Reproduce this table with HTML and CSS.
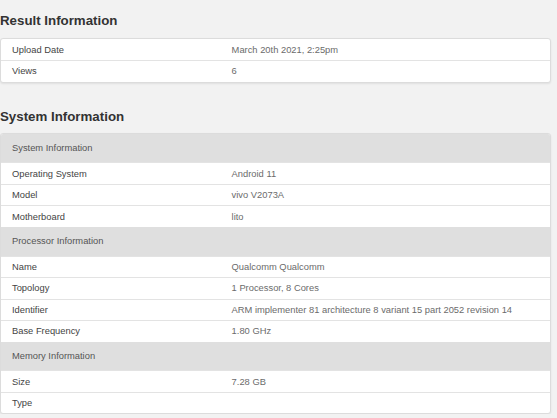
FILE: index.html
```html
<!DOCTYPE html>
<html>
<head>
<meta charset="utf-8">
<link rel="stylesheet" href="styles.css">
</head>
<body>
<div class="page">
  <h2 class="title">Result Information</h2>
  <div class="card">
    <div class="row"><div class="k">Upload Date</div><div class="v">March 20th 2021, 2:25pm</div></div>
    <div class="row"><div class="k">Views</div><div class="v">6</div></div>
  </div>
  <h2 class="title title2">System Information</h2>
  <div class="card">
    <div class="head">System Information</div>
    <div class="row"><div class="k">Operating System</div><div class="v">Android 11</div></div>
    <div class="row"><div class="k">Model</div><div class="v">vivo V2073A</div></div>
    <div class="row"><div class="k">Motherboard</div><div class="v">lito</div></div>
    <div class="head">Processor Information</div>
    <div class="row"><div class="k">Name</div><div class="v">Qualcomm Qualcomm</div></div>
    <div class="row"><div class="k">Topology</div><div class="v">1 Processor, 8 Cores</div></div>
    <div class="row"><div class="k">Identifier</div><div class="v">ARM implementer 81 architecture 8 variant 15 part 2052 revision 14</div></div>
    <div class="row"><div class="k">Base Frequency</div><div class="v">1.80 GHz</div></div>
    <div class="head">Memory Information</div>
    <div class="row"><div class="k">Size</div><div class="v">7.28 GB</div></div>
    <div class="row"><div class="k">Type</div><div class="v"></div></div>
  </div>
</div>
</body>
</html>
```

FILE: styles.css
```css
html, body {
  margin: 0;
  padding: 0;
  background: #f2f2f2;
}
body {
  font-family: "Liberation Sans", Arial, sans-serif;
  color: #444;
}
.page {
  width: 551px;
  padding-top: 13px;
}
.title {
  margin: 0 0 9px 0;
  font-size: 13.3px;
  line-height: 16px;
  font-weight: bold;
  color: #333;
}
.title2 {
  margin-top: 26px;
  margin-bottom: 8px;
}
.card {
  background: #fff;
  border: 1px solid #dcdcdc;
  border-radius: 3px;
  box-shadow: 0 1px 2px rgba(0,0,0,0.08);
  overflow: hidden;
}
.row {
  display: grid;
  grid-template-columns: 40% 1fr;
  height: 20.5px;
  align-items: center;
  font-size: 9.35px;
  border-top: 1px solid #e3e3e3;
}
.card > .row:first-child {
  border-top: none;
  height: 21px;
}
.k {
  padding-left: 11px;
  color: #444;
}
.v {
  padding-left: 11px;
  color: #6b6b6b;
}
.head {
  background: #dfdfdf;
  height: 28.8px;
  display: flex;
  align-items: center;
  padding-left: 11px;
  font-size: 9.35px;
  color: #555;
}
```
